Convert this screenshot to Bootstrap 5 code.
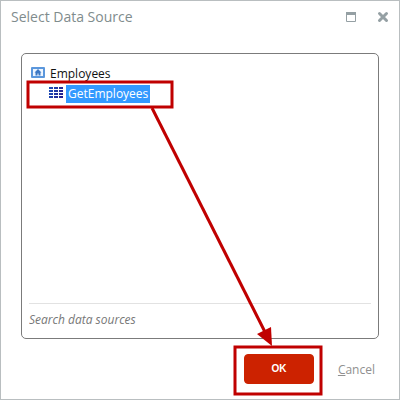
<!DOCTYPE html>
<html lang="en">
<head>
<meta charset="utf-8">
<meta name="viewport" content="width=device-width, initial-scale=1">
<title>Select Data Source</title>
<link href="https://cdn.jsdelivr.net/npm/bootstrap@5.3.0/dist/css/bootstrap.min.css" rel="stylesheet">
<style>
body { font-family: "Open Sans", "Noto Sans", sans-serif; font-size: 12px; line-height: 18px; color: #111; }
.dialog { border: 1px solid #b9bec0; }
.dialog-head { height: 52px; padding: 6px 8px 0 10px; color: #7f8c8d; }
.dialog-title { font-size: 14px; line-height: 20px; font-weight: 400; }
.tool { line-height: 0; padding: 2px; margin-top: 2px; color: #95a0a4; }
.source-panel { margin: 0 20px; border: 1px solid #7b7b7b; border-radius: 5px; padding: 10px 7px 8px; }
.tree-toggle { height: 20px; padding-left: 2px; gap: 5px; }
.tree-child { height: 20px; padding-left: 20px; gap: 3px; }
.tree-item { color: inherit; line-height: 18px; padding: 0 2px; }
.tree-item.selected { background: #3399ff; color: #fff; }
.search-box { border-top: 1px solid #e2e2e2; padding: 7px 0 1px; }
.search-box input { height: 18px; color: #777; font-style: italic; outline: 0; }
.search-box input::placeholder { color: #777; opacity: 1; }
.dialog-foot { height: 60px; padding: 15px 24px 0; gap: 24px; }
.ok-btn { --bs-btn-bg: #cc2200; --bs-btn-border-color: #cc2200; --bs-btn-color: #fff; --bs-btn-hover-bg: #b51e00; --bs-btn-hover-color: #fff; width: 70px; height: 30px; padding: 0; border-radius: 4px; font: 700 10px/28px "Liberation Sans", sans-serif; }
.cancel-link { color: #909090; line-height: 32px; }
.markup { pointer-events: none; }
</style>
<script src="https://cdn.jsdelivr.net/npm/bootstrap@5.3.0/dist/js/bootstrap.bundle.min.js"></script>
</head>
<body>
<main class="dialog position-relative d-flex flex-column min-vh-100 bg-white">
  <header class="dialog-head d-flex align-items-start">
    <h1 class="dialog-title m-0 me-auto">Select Data Source</h1>
    <div class="d-flex gap-3">
      <button type="button" class="tool btn border-0" aria-label="Maximize">
        <svg width="12" height="12" viewBox="0 0 12 12"><path d="M1.5 1.5h9v9h-9z" fill="#fff" stroke="currentColor"/><path d="M1 1h10v3H1z" fill="currentColor"/></svg>
      </button>
      <button type="button" class="tool btn border-0" aria-label="Close">
        <svg width="12" height="12" viewBox="0 0 12 12"><path d="M2.5 2.5l7 7M9.5 2.5l-7 7" stroke="currentColor" stroke-width="3" stroke-linecap="round"/></svg>
      </button>
    </div>
  </header>

  <section class="source-panel flex-grow-1 d-flex flex-column" aria-label="Data sources">
    <div class="flex-grow-1">
      <div class="tree-toggle d-flex align-items-center">
        <svg width="14" height="14" viewBox="0 0 14 14"><rect width="14" height="11" rx="1" fill="#5b97dc"/><path d="M2 2h10v7H2z" fill="#edf5ff"/><path d="M7 2L3.5 5.500h1V8.500h2v-2h1v2h2V5.500h1z" fill="#3c78c4"/></svg>
        <span>Employees</span>
      </div>
      <div class="tree-child d-flex align-items-center">
        <svg width="14" height="14" viewBox="0 0 14 14"><defs><linearGradient id="cells" gradientUnits="userSpaceOnUse" x1="0" y1="0" x2="14" y2="6"><stop stop-color="#1a50ba"/><stop offset="1" stop-color="#25208f"/></linearGradient></defs><path d="M0 0h4v2H0zM5 0h4v2H5zM10 0h4v2h-4zM0 3h4v2H0zM5 3h4v2H5zM10 3h4v2h-4zM0 6h4v2H0zM5 6h4v2H5zM10 6h4v2h-4zM0 9h4v2H0zM5 9h4v2H5zM10 9h4v2h-4z" fill="url(#cells)"/></svg>
        <a href="#" class="tree-item selected text-decoration-none">GetEmployees</a>
      </div>
    </div>
    <div class="search-box d-flex">
      <input type="text" class="w-100 border-0 p-0 bg-transparent" placeholder="Search data sources" aria-label="Search data sources">
    </div>
  </section>

  <footer class="dialog-foot d-flex align-items-start justify-content-end">
    <button type="button" class="ok-btn btn">OK</button>
    <a href="#" class="cancel-link text-decoration-none"><u>C</u>ancel</a>
  </footer>

  <!-- Walkthrough callouts: select the item, then confirm -->
  <svg class="markup position-absolute top-0 start-0" width="398" height="398" viewBox="1 1 398 398" fill="none" stroke="#c00000" stroke-width="3" aria-hidden="true">
    <path d="M28 82h144v25H28zM235 347h86v47h-86z"/>
    <path d="M152 108l113 224"/>
    <path d="M272 346l-15-12 14-7z" fill="#c00000" stroke="none"/>
  </svg>
</main>
</body>
</html>
